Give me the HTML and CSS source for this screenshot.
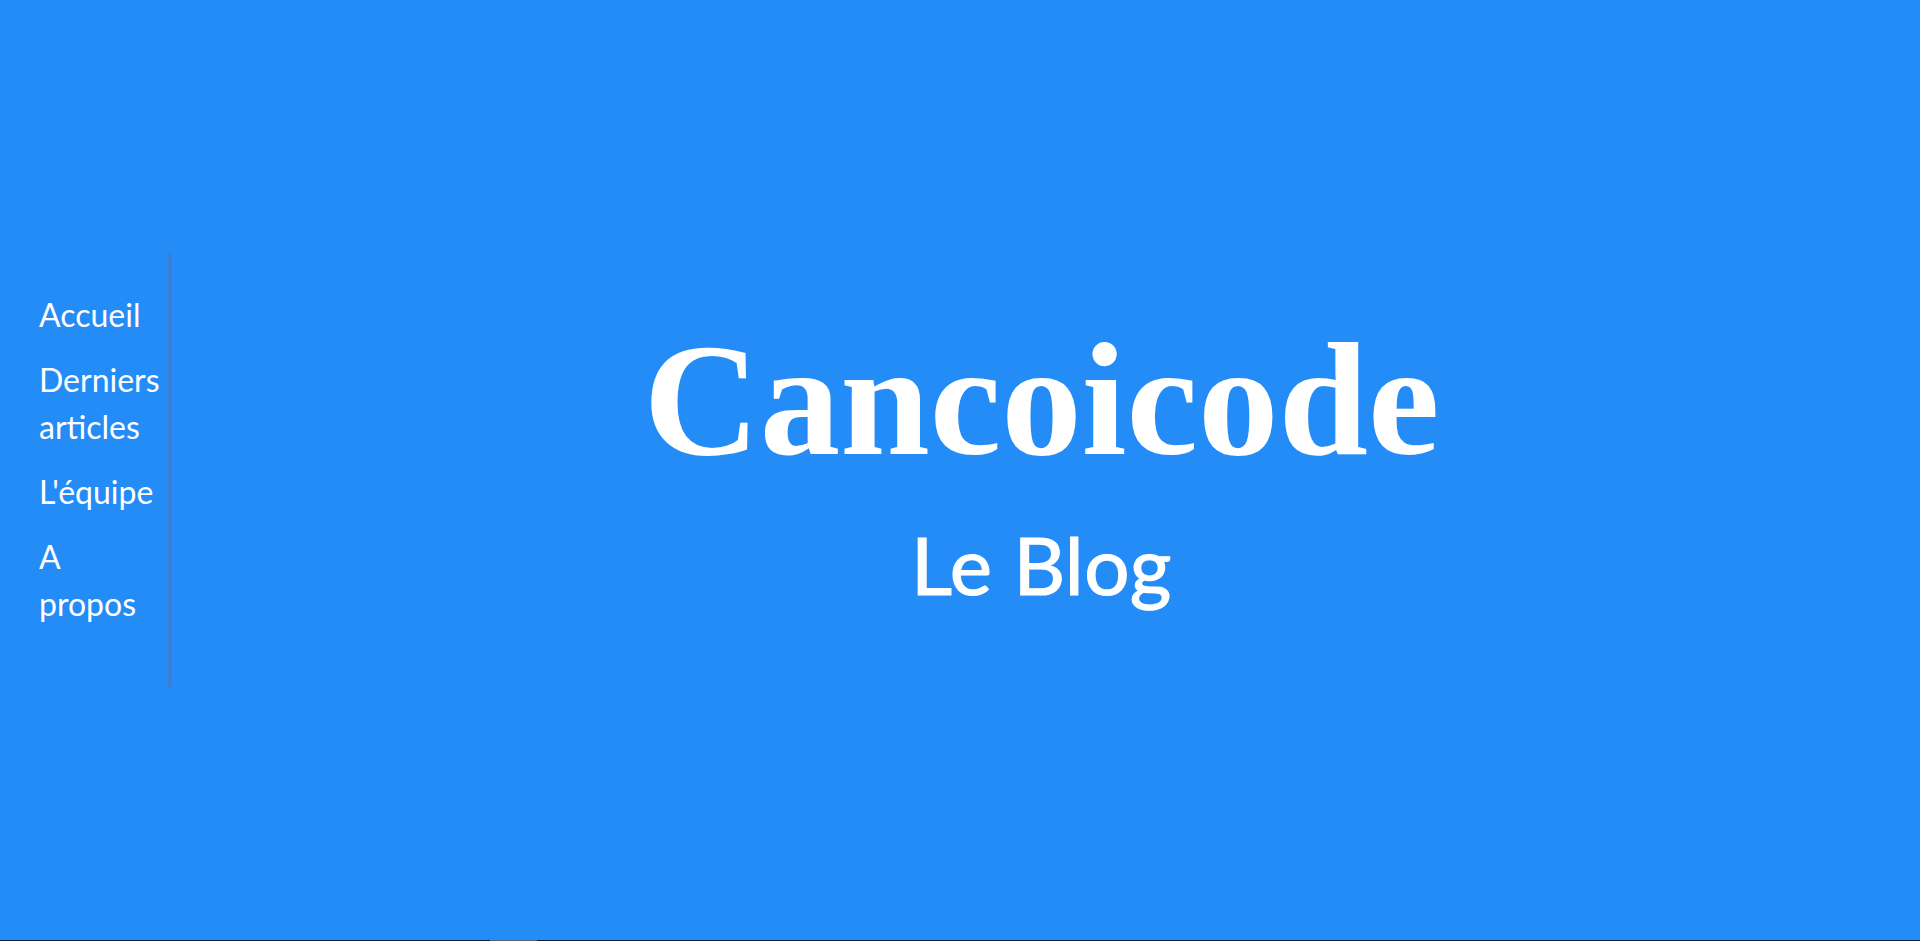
FILE: index.html
```html
<!DOCTYPE html>
<html lang="fr">
<head>
<meta charset="utf-8">
<title>Cancoicode - Le Blog</title>
<link rel="stylesheet" href="styles.css">
</head>
<body>
<header class="hero">
  <nav class="side-nav">
    <ul class="nav-list">
      <li class="nav-item"><a class="nav-link" href="#">Accueil</a></li>
      <li class="nav-item"><a class="nav-link" href="#">Derniers articles</a></li>
      <li class="nav-item"><a class="nav-link" href="#">L'équipe</a></li>
      <li class="nav-item"><a class="nav-link" href="#">A propos</a></li>
    </ul>
  </nav>
  <div class="brand">
    <h1 class="brand-title">Cancoicode</h1>
    <p class="brand-sub">Le Blog</p>
  </div>
</header>
<section class="next">
  <div class="next-peek"></div>
</section>
</body>
</html>
```
FILE: styles.css
```css
html, body {
  margin: 0;
  padding: 0;
}
body {
  background: #238cf7;
  font-family: "Lato", "Liberation Sans", sans-serif;
  color: #ffffff;
  overflow: hidden;
}
.hero {
  height: 940px;
  display: flex;
  align-items: center;
  background: #238cf7;
}
.side-nav {
  box-sizing: border-box;
  width: 172px;
  padding: 37px 7px 60px 39px;
  border-right: 4px solid #3b7fd0;
  flex: none;
}
.nav-list {
  list-style: none;
  margin: 0;
  padding: 0;
  width: 122px;
}
.nav-item {
  font-size: 32px;
  line-height: 47px;
  margin-bottom: 18px;
}
.nav-item:last-child {
  margin-bottom: 0;
}
.nav-link {
  color: #ffffff;
  text-decoration: none;
}
.brand {
  flex: 1;
  display: flex;
  flex-direction: column;
  align-items: center;
  padding-bottom: 18px;
  padding-right: 9px;
}
.brand-title {
  margin: 0;
  font-family: "Liberation Serif", "Times New Roman", serif;
  font-weight: 700;
  font-size: 161px;
  line-height: 160px;
}
.brand-sub {
  margin: 46px 0 0;
  font-family: "Lato", sans-serif;
  font-size: 80px;
  line-height: 77px;
  letter-spacing: 0.5px;
  -webkit-text-stroke: 1.2px #ffffff;
}
.next {
  height: 40px;
  background: #0e1a2f;
}
.next-peek {
  width: 47px;
  height: 1px;
  margin-left: 490px;
  background: #5c6470;
}
```
